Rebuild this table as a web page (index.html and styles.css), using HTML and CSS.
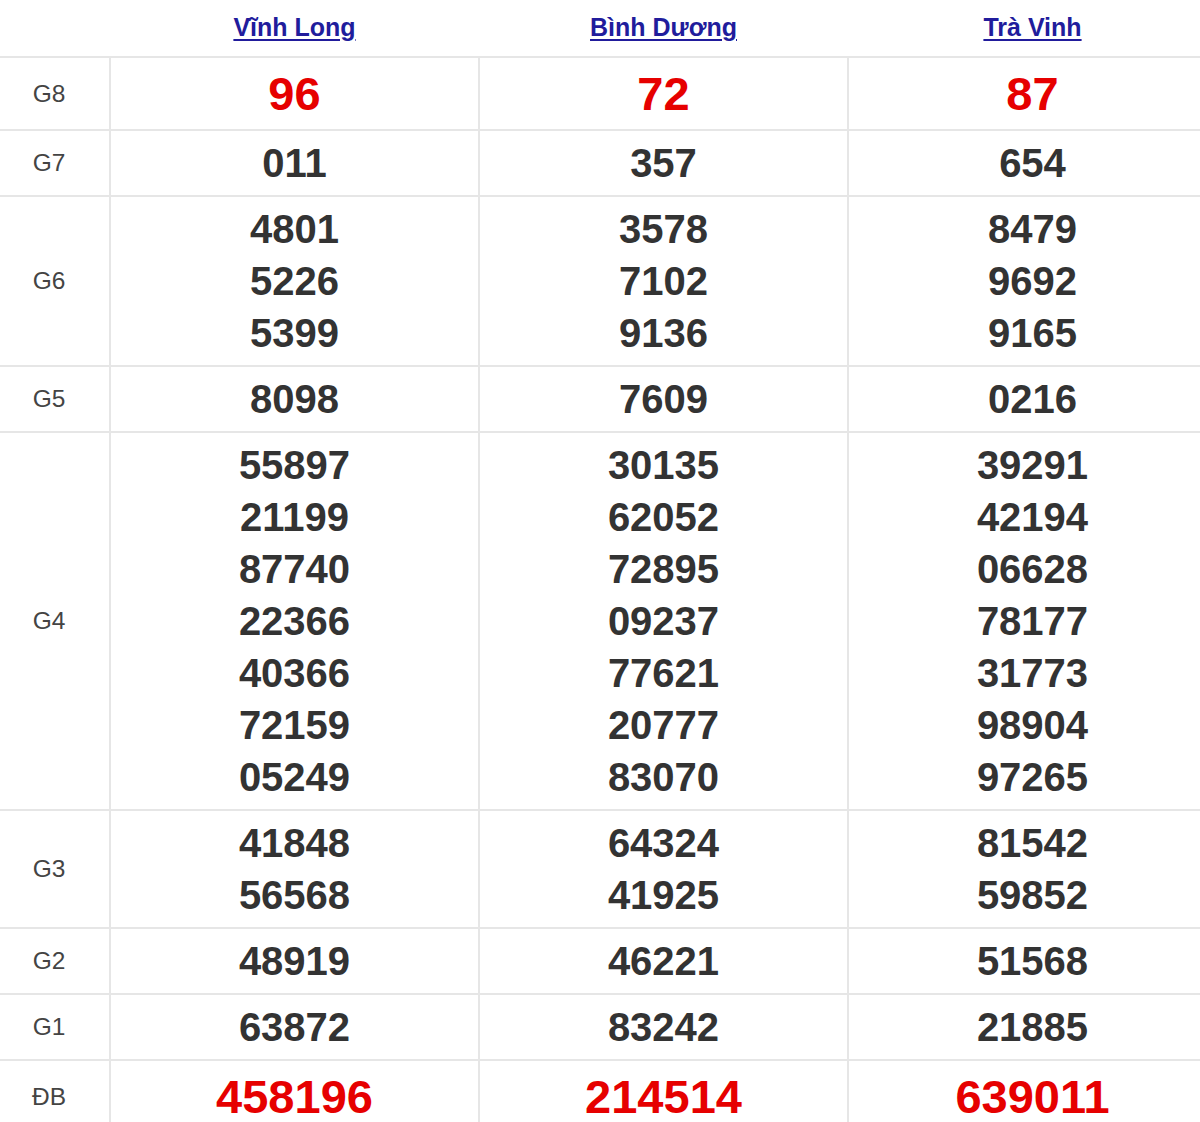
FILE: index.html
```html
<!DOCTYPE html>
<html lang="vi">
<head>
<meta charset="utf-8">
<title>Kết quả xổ số</title>
<link rel="stylesheet" href="styles.css">
</head>
<body>
<table class="kq">
  <colgroup>
    <col class="c-label">
    <col class="c-prov">
    <col class="c-prov">
    <col class="c-prov">
  </colgroup>
  <thead>
    <tr class="head">
      <th></th>
      <th><a href="#">Vĩnh Long</a></th>
      <th><a href="#">Bình Dương</a></th>
      <th><a href="#">Trà Vinh</a></th>
    </tr>
  </thead>
  <tbody>
    <tr class="big">
      <td class="lbl">G8</td>
      <td class="num red"><div>96</div></td>
      <td class="num red"><div>72</div></td>
      <td class="num red"><div>87</div></td>
    </tr>
    <tr>
      <td class="lbl">G7</td>
      <td class="num"><div>011</div></td>
      <td class="num"><div>357</div></td>
      <td class="num"><div>654</div></td>
    </tr>
    <tr>
      <td class="lbl">G6</td>
      <td class="num"><div>4801</div><div>5226</div><div>5399</div></td>
      <td class="num"><div>3578</div><div>7102</div><div>9136</div></td>
      <td class="num"><div>8479</div><div>9692</div><div>9165</div></td>
    </tr>
    <tr>
      <td class="lbl">G5</td>
      <td class="num"><div>8098</div></td>
      <td class="num"><div>7609</div></td>
      <td class="num"><div>0216</div></td>
    </tr>
    <tr>
      <td class="lbl">G4</td>
      <td class="num"><div>55897</div><div>21199</div><div>87740</div><div>22366</div><div>40366</div><div>72159</div><div>05249</div></td>
      <td class="num"><div>30135</div><div>62052</div><div>72895</div><div>09237</div><div>77621</div><div>20777</div><div>83070</div></td>
      <td class="num"><div>39291</div><div>42194</div><div>06628</div><div>78177</div><div>31773</div><div>98904</div><div>97265</div></td>
    </tr>
    <tr>
      <td class="lbl">G3</td>
      <td class="num"><div>41848</div><div>56568</div></td>
      <td class="num"><div>64324</div><div>41925</div></td>
      <td class="num"><div>81542</div><div>59852</div></td>
    </tr>
    <tr>
      <td class="lbl">G2</td>
      <td class="num"><div>48919</div></td>
      <td class="num"><div>46221</div></td>
      <td class="num"><div>51568</div></td>
    </tr>
    <tr>
      <td class="lbl">G1</td>
      <td class="num"><div>63872</div></td>
      <td class="num"><div>83242</div></td>
      <td class="num"><div>21885</div></td>
    </tr>
    <tr class="big">
      <td class="lbl">ĐB</td>
      <td class="num red"><div>458196</div></td>
      <td class="num red"><div>214514</div></td>
      <td class="num red"><div>639011</div></td>
    </tr>
  </tbody>
</table>
</body>
</html>
```
FILE: styles.css
```css
html, body {
  margin: 0;
  padding: 0;
  background: #fff;
  overflow: hidden;
}

body {
  font-family: "Liberation Sans", Arial, sans-serif;
  color: #333;
}

.kq {
  width: 1218px;
  border-collapse: collapse;
  table-layout: fixed;
}

.c-label { width: 110px; }
.c-prov { width: 369px; }

.head th {
  height: 56px;
  padding: 0;
  border-bottom: 2px solid #e6e6e6;
  text-align: center;
  vertical-align: middle;
  font-size: 25px;
  font-weight: bold;
}

.head a {
  color: #211c9c;
  text-decoration: underline;
  text-decoration-thickness: 2px;
  text-underline-offset: 3px;
  position: relative;
  top: -1px;
}

tbody td {
  border: 2px solid #e6e6e6;
  padding: 6px 0;
  text-align: center;
  vertical-align: middle;
}

tbody tr td:first-child {
  border-left: none;
}

.lbl {
  font-size: 24.5px;
  color: #444;
  padding-right: 11px;
}

.num {
  font-size: 40px;
  font-weight: bold;
  color: #333;
  line-height: 52px;
}

.num.red {
  color: #e60000;
  font-size: 47px;
  line-height: 59px;
}
```
